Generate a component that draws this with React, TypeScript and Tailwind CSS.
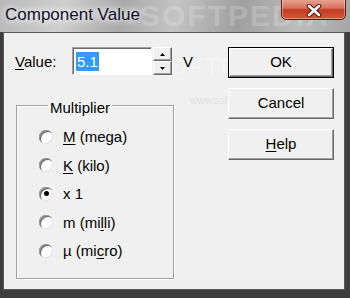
import React from 'react'

const font = { fontFamily: '"Liberation Sans", Arial, sans-serif' }

function Underlined({ text, at }: { text: string; at: number }) {
  return (
    <>
      {text.slice(0, at)}
      <span className="underline decoration-1 underline-offset-2">{text[at]}</span>
      {text.slice(at + 1)}
    </>
  )
}

function Radio({ checked, children }: { checked?: boolean; children: React.ReactNode }) {
  return (
    <div className="flex h-[28.5px] items-center gap-[10px]">
      <span className="relative flex h-[14px] w-[14px] items-center justify-center rounded-full bg-white shadow-[inset_1px_1px_0_#a0a0a0,inset_2px_2px_0_#696969,inset_-1px_-1px_0_#e3e3e3]">
        {checked && <span className="h-[5px] w-[5px] rounded-full bg-black" />}
      </span>
      <span className="text-[15px] leading-[19px] text-black">{children}</span>
    </div>
  )
}

function SpinHalf({ up }: { up?: boolean }) {
  return (
    <div className="flex h-[14px] items-center justify-center border border-t-white border-l-white border-r-[#696969] border-b-[#696969] bg-[#f0f0f0] shadow-[inset_-1px_-1px_0_#a0a0a0]">
      <svg width="5" height="3" viewBox="0 0 5 3">
        {up ? <path d="M2.5 0L5 3H0Z" fill="#000" /> : <path d="M0 0H5L2.5 3Z" fill="#000" />}
      </svg>
    </div>
  )
}

function Button({ children, isDefault }: { children: React.ReactNode; isDefault?: boolean }) {
  return (
    <div className={isDefault ? 'border border-black' : ''}>
      <div
        className={`flex items-center justify-center border border-t-white border-l-white border-r-[#696969] border-b-[#696969] bg-[#f0f0f0] text-[15px] text-black shadow-[inset_-1px_-1px_0_#a0a0a0] ${
          isDefault ? 'h-[29px]' : 'h-[31px]'
        }`}
      >
        {children}
      </div>
    </div>
  )
}

export default function App() {
  return (
    <div className="relative flex h-[298px] w-[350px] flex-col overflow-hidden bg-[#3d3d3d]" style={font}>
      {/* glass title bar */}
      <div className="relative h-[32px] shrink-0 overflow-hidden bg-[linear-gradient(100deg,#b8b8b8_0%,#cfcfcf_18%,#a9a9a9_35%,#c4c4c4_50%,#9f9f9f_68%,#bdbdbd_85%,#a5a5a5_100%)]">
        <span className="pointer-events-none absolute left-[140px] top-[-2px] text-[30px] font-bold leading-[36px] tracking-[2px] text-white/20">
          SOFTPEDIA
        </span>
        <span className="absolute left-[5px] top-[5px] text-[17px] leading-[20px] text-[#10132a] [text-shadow:0_0_6px_#fff,0_0_10px_#fff]">
          Component Value
        </span>
        <div className="absolute left-[281px] top-[-2px] flex h-[22px] w-[65px] items-center justify-center rounded-b-[5px] border border-[#5e1a10] bg-[linear-gradient(#e9a796,#d7725e_45%,#c2391f_55%,#d45a3c)] shadow-[inset_0_0_0_1px_rgba(255,255,255,0.35)]">
          <svg width="16" height="13" viewBox="0 0 16 13" className="mt-[3px]">
            <path d="M3 2L13 11M13 2L3 11" stroke="#4a1a12" strokeWidth="4.6" strokeLinecap="round" />
            <path d="M3 2L13 11M13 2L3 11" stroke="#fff" strokeWidth="2.6" strokeLinecap="round" />
          </svg>
        </div>
      </div>

      <div className="flex flex-1 pb-[8px] pl-[3px] pr-[5px]">
        {/* client area */}
        <div className="relative flex w-[342px] border border-[#5a5a5a] bg-[#f0f0f0] pl-[11px] pt-[14px]">
          <span className="pointer-events-none absolute left-[148px] top-[20px] text-[24px] font-bold leading-[28px] tracking-[1px] text-white/60 [text-shadow:0_0_1px_#e2e2e2]">
            SOFTPEDIA
          </span>
          <span className="pointer-events-none absolute left-[186px] top-[62px] text-[10px] leading-[12px] text-[#e0e0e0]">
            www.softpedia.com
          </span>

          <div className="relative flex w-[213px] flex-col">
            {/* value row */}
            <div className="flex h-[28px] items-center text-[15px] text-black">
              <span className="w-[57px] leading-[19px]">
                <Underlined text="Value:" at={0} />
              </span>
              <div className="flex h-[28px] w-[80px] items-center border border-t-[#a0a0a0] border-l-[#a0a0a0] border-r-white border-b-white bg-white pl-[3px] shadow-[inset_1px_1px_0_#696969]">
                <span className="bg-[#3399ff] px-[1px] leading-[19px] text-white">5.1</span>
              </div>
              <div className="ml-[1px] flex w-[19px] flex-col">
                <SpinHalf up />
                <SpinHalf />
              </div>
              <span className="ml-[11px] leading-[19px]">V</span>
            </div>

            {/* multiplier group */}
            <fieldset className="ml-[1px] mt-[21.5px] h-[182px] w-[158px] border border-[#a0a0a0] pl-[22px] shadow-[inset_1px_1px_0_#fff,1px_1px_0_#fff]">
              <legend className="ml-[9px] px-[2px] text-[15px] leading-[17px] text-black">
                <span className="relative top-[2px]">Multiplier</span>
              </legend>
              <div className="flex flex-col pt-[9px]">
                <Radio>
                  <Underlined text="M (mega)" at={0} />
                </Radio>
                <Radio>
                  <Underlined text="K (kilo)" at={0} />
                </Radio>
                <Radio checked>x 1</Radio>
                <Radio>
                  <Underlined text="m (milli)" at={5} />
                </Radio>
                <Radio>
                  <Underlined text="µ (micro)" at={5} />
                </Radio>
              </div>
            </fieldset>
          </div>

          {/* buttons */}
          <div className="relative flex w-[106px] flex-col gap-[10px]">
            <Button isDefault>OK</Button>
            <Button>Cancel</Button>
            <Button>
              <Underlined text="Help" at={0} />
            </Button>
          </div>
        </div>
      </div>
    </div>
  )
}
